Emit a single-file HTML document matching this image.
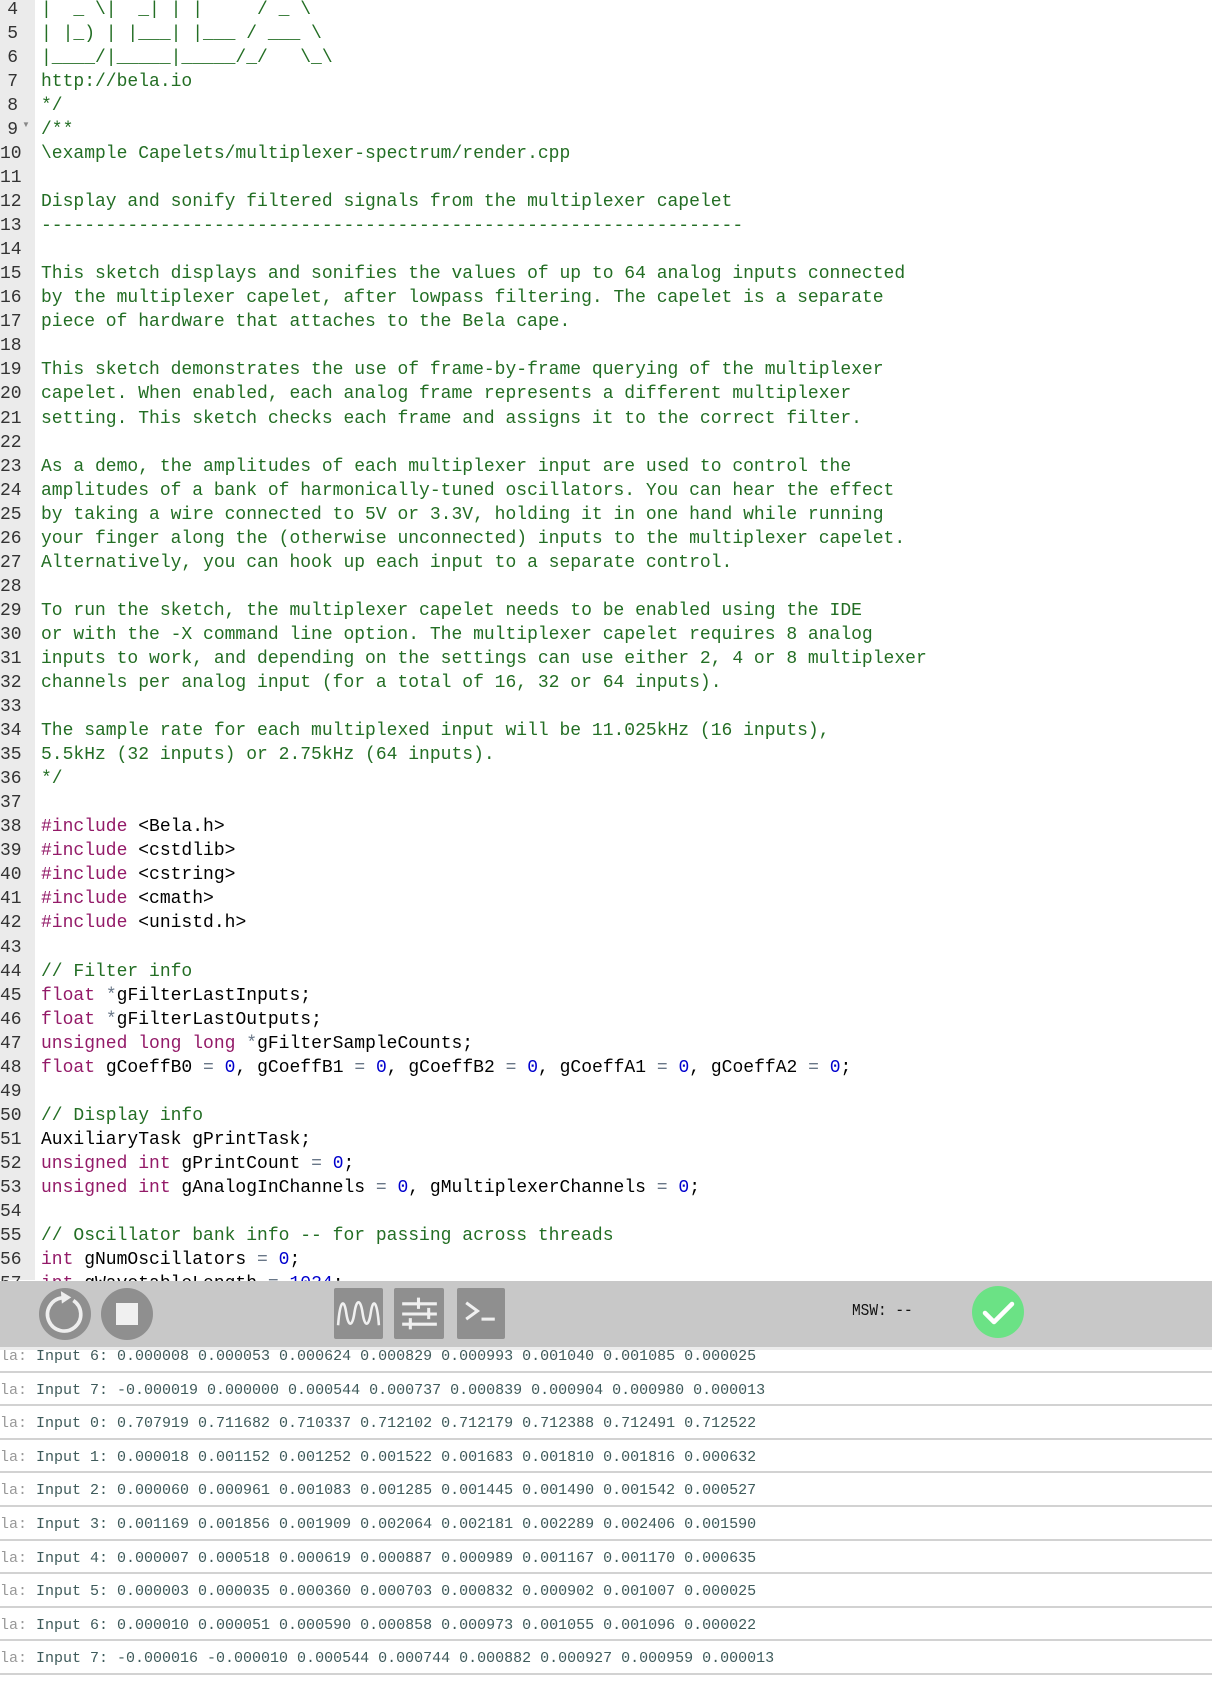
<!DOCTYPE html>
<html><head><meta charset="utf-8"><style>
html,body{margin:0;padding:0;width:1212px;height:1686px;overflow:hidden;background:#fff;}
#gut{position:absolute;left:0;top:0;width:35px;height:1280px;background:#ebebeb;}
#nums{position:absolute;left:0;top:-2.3px;width:18px;text-align:right;font:18px/24.04px "Liberation Mono",monospace;color:#333;white-space:pre;}
#code{position:absolute;left:41px;top:-2.3px;font:18px/24.04px "Liberation Mono",monospace;color:#000;white-space:pre;}
.c{color:#236e24}.k{color:#931a68}.n{color:#0000cd}.o{color:#687687}
#fold{position:absolute;left:22px;top:120px;font-size:8px;color:#888;}
#bar{position:absolute;left:0;top:1281px;width:1212px;height:66px;background:#c8c8c8;}
#barline{position:absolute;left:0;top:1347px;width:1212px;height:3px;background:#ececec;}
.circ{position:absolute;top:1288px;width:52px;height:52px;border-radius:50%;background:#8f8f8f;}
.btn{position:absolute;top:1288px;width:49px;height:51px;background:#8f8f8f;border-radius:2px;}
#msw{position:absolute;left:852px;top:1302px;font:17px "Liberation Mono",monospace;color:#111;transform:scaleX(0.85);transform-origin:left;}
#ok{position:absolute;left:972px;top:1286px;width:52px;height:52px;border-radius:50%;background:#6be285;}
#con{position:absolute;left:0;top:1339px;width:1212px;}
.row{height:31.6px;border-bottom:2.2px solid #d2d2d2;font:15px/36px "Liberation Mono",monospace;color:#3e5a5a;white-space:pre;}
.row span{color:#999}
</style></head><body>
<div id="code"><span class="c">|  _ \|  _| | |     / _ \
| |_) | |___| |___ / ___ \
|____/|_____|_____/_/   \_\
http://bela.io
*/
/**
\example Capelets/multiplexer-spectrum/render.cpp

Display and sonify filtered signals from the multiplexer capelet
-----------------------------------------------------------------

This sketch displays and sonifies the values of up to 64 analog inputs connected
by the multiplexer capelet, after lowpass filtering. The capelet is a separate
piece of hardware that attaches to the Bela cape.

This sketch demonstrates the use of frame-by-frame querying of the multiplexer
capelet. When enabled, each analog frame represents a different multiplexer
setting. This sketch checks each frame and assigns it to the correct filter.

As a demo, the amplitudes of each multiplexer input are used to control the
amplitudes of a bank of harmonically-tuned oscillators. You can hear the effect
by taking a wire connected to 5V or 3.3V, holding it in one hand while running
your finger along the (otherwise unconnected) inputs to the multiplexer capelet.
Alternatively, you can hook up each input to a separate control.

To run the sketch, the multiplexer capelet needs to be enabled using the IDE
or with the -X command line option. The multiplexer capelet requires 8 analog
inputs to work, and depending on the settings can use either 2, 4 or 8 multiplexer
channels per analog input (for a total of 16, 32 or 64 inputs).

The sample rate for each multiplexed input will be 11.025kHz (16 inputs),
5.5kHz (32 inputs) or 2.75kHz (64 inputs).
*/</span>

<span class="k">#include</span> &lt;Bela.h&gt;
<span class="k">#include</span> &lt;cstdlib&gt;
<span class="k">#include</span> &lt;cstring&gt;
<span class="k">#include</span> &lt;cmath&gt;
<span class="k">#include</span> &lt;unistd.h&gt;

<span class="c">// Filter info</span>
<span class="k">float</span> <span class="o">*</span>gFilterLastInputs;
<span class="k">float</span> <span class="o">*</span>gFilterLastOutputs;
<span class="k">unsigned long long</span> <span class="o">*</span>gFilterSampleCounts;
<span class="k">float</span> gCoeffB0 <span class="o">=</span> <span class="n">0</span>, gCoeffB1 <span class="o">=</span> <span class="n">0</span>, gCoeffB2 <span class="o">=</span> <span class="n">0</span>, gCoeffA1 <span class="o">=</span> <span class="n">0</span>, gCoeffA2 <span class="o">=</span> <span class="n">0</span>;

<span class="c">// Display info</span>
AuxiliaryTask gPrintTask;
<span class="k">unsigned int</span> gPrintCount <span class="o">=</span> <span class="n">0</span>;
<span class="k">unsigned int</span> gAnalogInChannels <span class="o">=</span> <span class="n">0</span>, gMultiplexerChannels <span class="o">=</span> <span class="n">0</span>;

<span class="c">// Oscillator bank info -- for passing across threads</span>
<span class="k">int</span> gNumOscillators <span class="o">=</span> <span class="n">0</span>;
<span class="k">int</span> gWavetableLength <span class="o">=</span> <span class="n">1024</span>;</div>
<div id="gut"></div>
<div id="nums">4
5
6
7
8
9
10
11
12
13
14
15
16
17
18
19
20
21
22
23
24
25
26
27
28
29
30
31
32
33
34
35
36
37
38
39
40
41
42
43
44
45
46
47
48
49
50
51
52
53
54
55
56
57</div>
<div id="fold">▼</div>

<div id="con">
<div class="row"><span>la:</span> Input 6: 0.000008 0.000053 0.000624 0.000829 0.000993 0.001040 0.001085 0.000025</div>
<div class="row"><span>la:</span> Input 7: -0.000019 0.000000 0.000544 0.000737 0.000839 0.000904 0.000980 0.000013</div>
<div class="row"><span>la:</span> Input 0: 0.707919 0.711682 0.710337 0.712102 0.712179 0.712388 0.712491 0.712522</div>
<div class="row"><span>la:</span> Input 1: 0.000018 0.001152 0.001252 0.001522 0.001683 0.001810 0.001816 0.000632</div>
<div class="row"><span>la:</span> Input 2: 0.000060 0.000961 0.001083 0.001285 0.001445 0.001490 0.001542 0.000527</div>
<div class="row"><span>la:</span> Input 3: 0.001169 0.001856 0.001909 0.002064 0.002181 0.002289 0.002406 0.001590</div>
<div class="row"><span>la:</span> Input 4: 0.000007 0.000518 0.000619 0.000887 0.000989 0.001167 0.001170 0.000635</div>
<div class="row"><span>la:</span> Input 5: 0.000003 0.000035 0.000360 0.000703 0.000832 0.000902 0.001007 0.000025</div>
<div class="row"><span>la:</span> Input 6: 0.000010 0.000051 0.000590 0.000858 0.000973 0.001055 0.001096 0.000022</div>
<div class="row"><span>la:</span> Input 7: -0.000016 -0.000010 0.000544 0.000744 0.000882 0.000927 0.000959 0.000013</div>
</div>

<div id="bar"></div>
<div id="barline"></div>
<div class="circ" style="left:39px"><svg width="52" height="52" viewBox="0 0 50 50"><path d="M33 12 A16 16 0 1 1 22 9.5" fill="none" stroke="#eee" stroke-width="3.5"/><path d="M21 3 L31 9 L22 15 Z" fill="#eee"/></svg></div>
<div class="circ" style="left:101px"><div style="position:absolute;left:15px;top:15px;width:22px;height:22px;background:#f0f0f0"></div></div>
<div class="btn" style="left:334px"><svg width="49" height="51" viewBox="0 0 48 49"><path d="M4 36 C6 10 10 10 12 24 C14 38 18 38 20 24 C22 10 26 10 28 24 C30 38 34 38 36 24 C38 10 42 10 44 36" fill="none" stroke="#f0f0f0" stroke-width="2.5"/></svg></div>
<div class="btn" style="left:394px;width:50px"><svg width="50" height="51" viewBox="0 0 49 49"><g stroke="#f0f0f0" stroke-width="3"><path d="M8 15H42M8 25H42M8 35H42M24 9V20M34 19V30M16 29V40"/></g></svg></div>
<div class="btn" style="left:457px;width:48px"><svg width="48" height="51" viewBox="0 0 47 49"><path d="M9 14 L20 22 L9 30" fill="none" stroke="#f0f0f0" stroke-width="3"/><path d="M24 30H37" stroke="#f0f0f0" stroke-width="3"/></svg></div>
<div id="msw">MSW: --</div>
<div id="ok"><svg width="52" height="52" viewBox="0 0 52 52"><path d="M13 27 L22 36 L40 18" fill="none" stroke="#fff" stroke-width="4.5" stroke-linecap="round" stroke-linejoin="round"/></svg></div>
</body></html>
